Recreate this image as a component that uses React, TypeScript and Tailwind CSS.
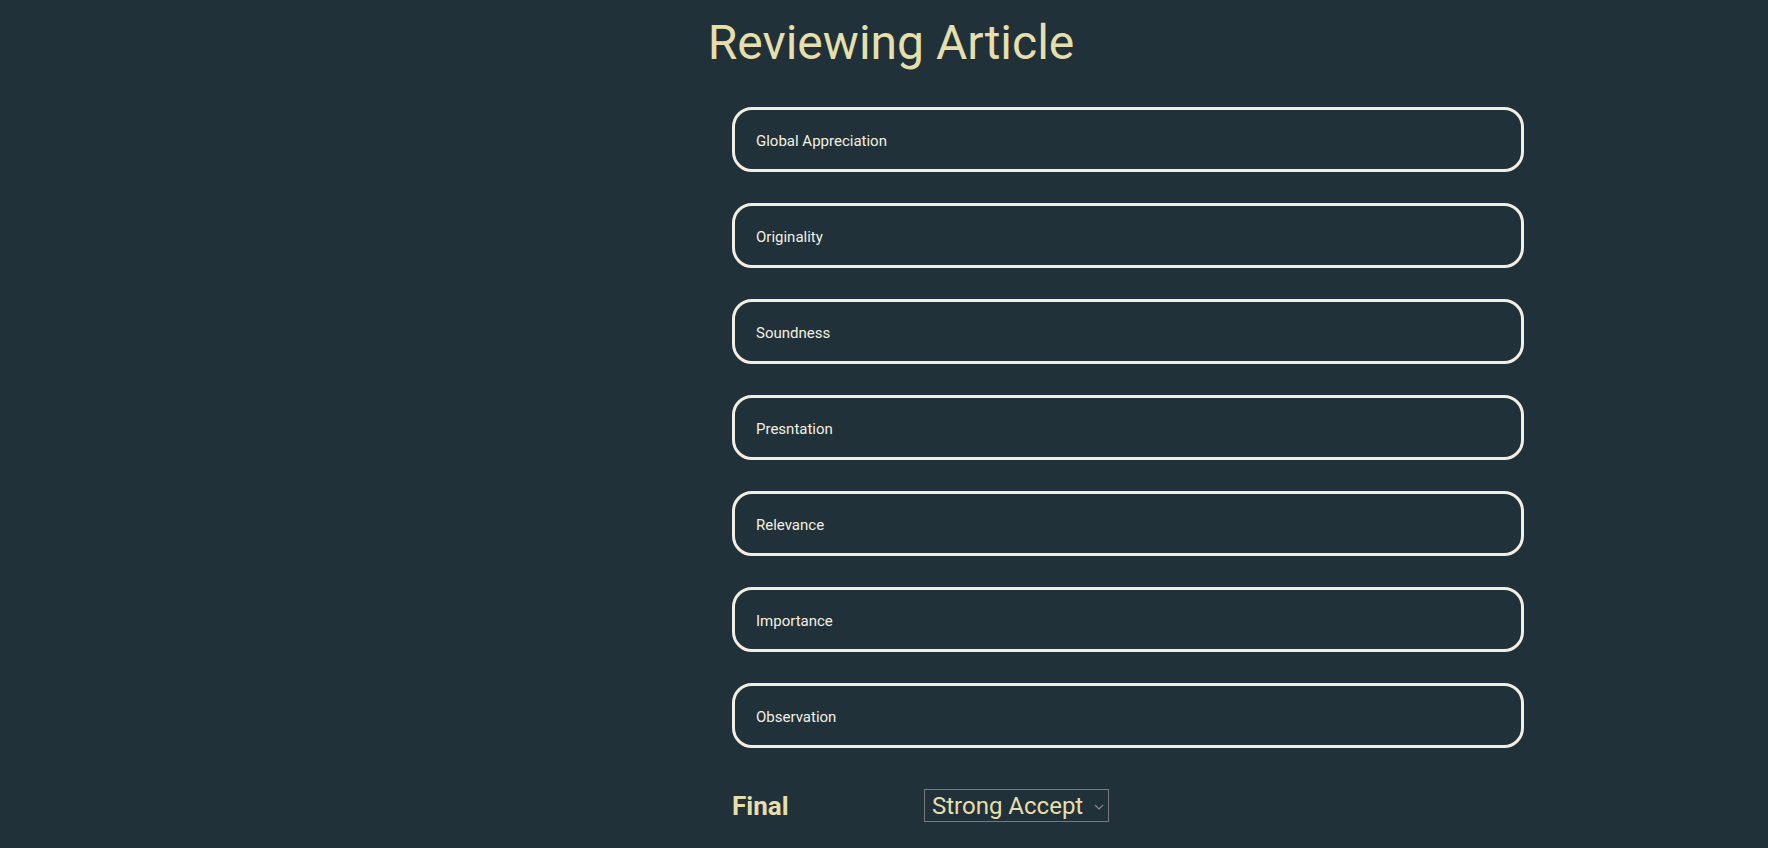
import React from "react";

const fields = [
  "Global Appreciation",
  "Originality",
  "Soundness",
  "Presntation",
  "Relevance",
  "Importance",
  "Observation",
];

export default function App() {
  return (
    <div
      className="min-h-screen w-full bg-[#20313a]"
      style={{ fontFamily: "Roboto, 'Liberation Sans', sans-serif" }}
    >
      <h1 className="pt-[15px] pl-[14px] text-center text-[48px] font-normal leading-[56px] text-[#e6dfab]">
        Reviewing Article
      </h1>
      <div className="mt-[36px] flex flex-col gap-[31px] pl-[732px]">
        {fields.map((f) => (
          <div
            key={f}
            className="flex h-[65px] w-[792px] items-center rounded-[20px] border-[3px] border-[#f2efe1] pl-[21px] pt-[3px] text-[15px] text-[#f4f0e0]"
          >
            {f}
          </div>
        ))}
        <div className="mt-[10px] flex items-center">
          <div className="w-[192px] text-[26px] font-bold leading-[30px] text-[#e6dfab]">
            Final
          </div>
          <div className="flex h-[33px] w-[185px] items-center justify-between border border-[#7a7a7a] pl-[7px] pr-[4px] text-[24px] leading-[28px] text-[#e6dfab]">
            <span>Strong Accept</span>
            <svg width="10" height="6" viewBox="0 0 10 6" className="mt-[2px]">
              <path d="M1 1 L5 5 L9 1" fill="none" stroke="#8a8a8a" strokeWidth="1.2" />
            </svg>
          </div>
        </div>
      </div>
    </div>
  );
}
